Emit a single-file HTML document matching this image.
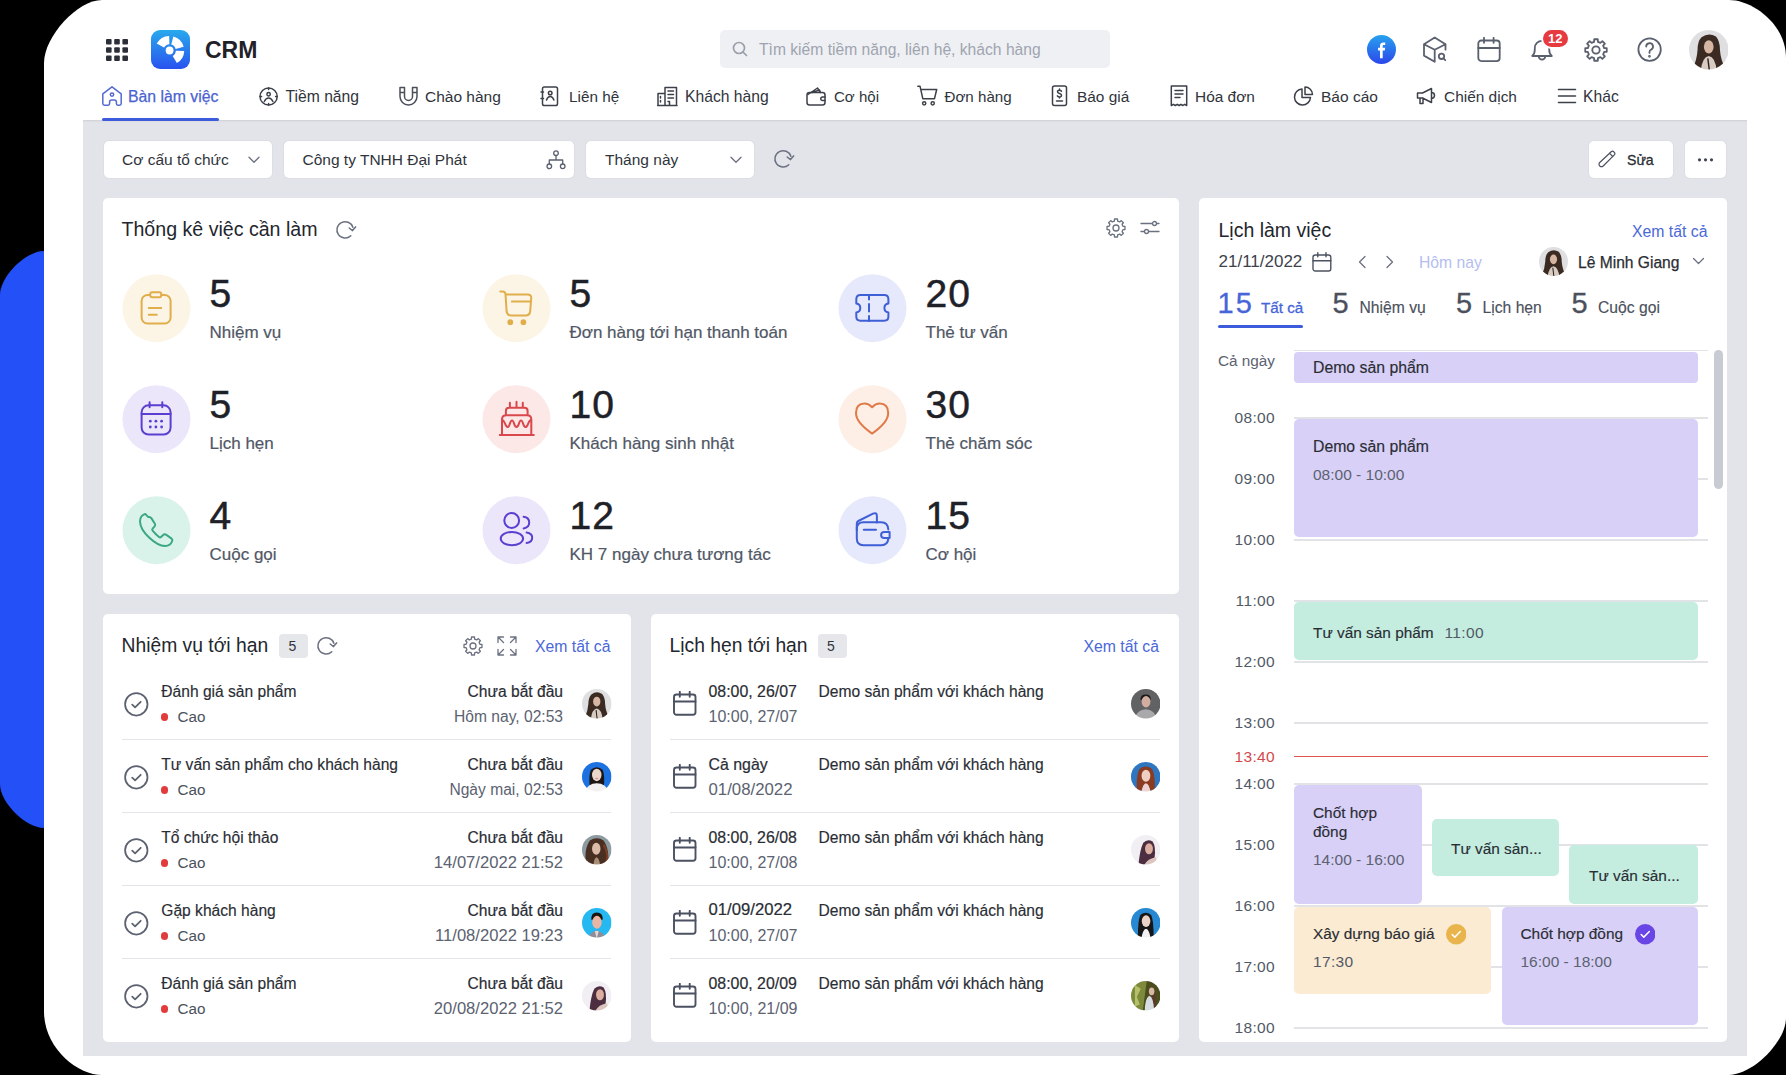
<!DOCTYPE html>
<html><head><meta charset="utf-8">
<style>
*{box-sizing:border-box;margin:0;padding:0}
html,body{width:1786px;height:1075px;overflow:hidden;background:#000}
body{position:relative;font-family:"Liberation Sans",sans-serif;color:#23262d}
.abs{position:absolute}
.t{position:absolute;line-height:0;white-space:nowrap;top:calc(var(--b)*1px - 0.3465em)}
.r{transform:translateX(-100%)}
.blue{position:absolute;left:-2px;top:251px;width:120px;height:577px;background:#2450f8;border-radius:46px}
.frame{position:absolute;left:44px;top:0;width:1742px;height:1075px;background:#fff;border-radius:60px}
.gray{position:absolute;left:83px;top:120px;width:1664px;height:936px;background:#e3e4e9;box-shadow:inset 0 2px 2px -1px rgba(0,0,0,0.09)}
.panel{position:absolute;background:#fff;border-radius:5px}
.nav{font-size:15.7px;color:#30343b}
.nav svg{position:absolute;top:86px}
.ico{fill:none;stroke:#4b5160;stroke-width:1.6;stroke-linecap:round;stroke-linejoin:round}
.dd{position:absolute;top:141px;height:37px;background:#fff;border-radius:5px;box-shadow:0 0 0 1px #dcdee4}
.ft{font-size:15.5px;color:#30343b}
.circ{position:absolute;width:68px;height:68px;border-radius:50%}
.num{font-size:39px;letter-spacing:1px;color:#1e2127;font-weight:400;-webkit-text-stroke:0.5px #1e2127}
.lab{font-size:17px;color:#505766;-webkit-text-stroke:0.2px #505766}
.sep{position:absolute;height:1px;background:#e3e5ea}
</style></head><body>
<svg width="0" height="0" style="position:absolute"><defs><filter id="soft" x="-10%" y="-10%" width="120%" height="120%"><feGaussianBlur stdDeviation="0.45"/></filter></defs></svg>
<svg class="abs" style="left:0;top:0" width="60" height="1075" viewBox="0 0 60 1075"><path d="M50 251H44C25.5 251 0 276.5 0 295V784C0 802.5 25.5 828 44 828H50Z" fill="#2450f8"/></svg>
<svg class="abs" style="left:0;top:0" width="1786" height="1075" viewBox="0 0 1786 1075"><path d="M44 63C44 36.5 77.6 0 102 0L1729 0C1752.9 0 1786 24.4 1786 58L1786 1017.7C1786 1041.8 1752.8 1075 1728.7 1075L102 1075C77.6 1075 44 1048.3 44 1011.5Z" fill="#fff"/></svg>
<div class="gray"></div>

<!-- HEADER -->
<svg class="abs" style="left:106px;top:39px" width="22" height="22" viewBox="0 0 22 22" fill="#2b2f38">
<rect x="0" y="0" width="5.6" height="5.6" rx="1"/><rect x="8.2" y="0" width="5.6" height="5.6" rx="1"/><rect x="16.4" y="0" width="5.6" height="5.6" rx="1"/>
<rect x="0" y="8.2" width="5.6" height="5.6" rx="1"/><rect x="8.2" y="8.2" width="5.6" height="5.6" rx="1"/><rect x="16.4" y="8.2" width="5.6" height="5.6" rx="1"/>
<rect x="0" y="16.4" width="5.6" height="5.6" rx="1"/><rect x="8.2" y="16.4" width="5.6" height="5.6" rx="1"/><rect x="16.4" y="16.4" width="5.6" height="5.6" rx="1"/>
</svg>
<div class="abs" style="left:151px;top:30px;width:39px;height:39px;border-radius:9px;background:linear-gradient(180deg,#28aaec,#2a52ef)"></div>
<svg class="abs" style="left:151px;top:30px" width="39" height="39" viewBox="0 0 39 39" fill="#fff">
<path d="M5.7 13.6A14.6 14.6 0 0 1 18.1 5.9L18.4 14.3A6.2 6.2 0 0 0 13.1 17.6Z"/>
<path d="M22.4 6.4A14.6 14.6 0 0 1 32.7 16.7L24.6 18.9A6.2 6.2 0 0 0 20.2 14.5Z"/>
<path d="M33.2 21.0A14.6 14.6 0 0 1 25.9 33.1L21.7 25.9A6.2 6.2 0 0 0 24.8 20.7Z"/>
<circle cx="18.6" cy="20.5" r="3.9"/>
</svg>
<div class="t" style="left:205px;--b:58;font-size:23px;font-weight:700;color:#1f2228">CRM</div>

<div class="abs" style="left:720px;top:30px;width:390px;height:38px;background:#eff0f3;border-radius:5px"></div>
<svg class="abs" style="left:732px;top:41px" width="16" height="16" viewBox="0 0 16 16"><circle cx="7" cy="7" r="5.5" fill="none" stroke="#9aa0ab" stroke-width="1.7"/><path d="M11 11l3.5 3.5" stroke="#9aa0ab" stroke-width="1.7" stroke-linecap="round"/></svg>
<div class="t" style="left:759px;--b:55.7;font-size:15.65px;color:#9ea4b0">Tìm kiếm tiềm năng, liên hệ, khách hàng</div>


<!-- header right icons -->
<div class="abs" style="left:1367px;top:35px;width:29px;height:29px;border-radius:50%;background:linear-gradient(180deg,#27a2ef,#2b47ea)"></div>
<svg class="abs" style="left:1367px;top:35px" width="29" height="29" viewBox="0 0 29 29"><path d="M13 23.3V15.6h-2v-2.9h2v-1.9c0-2.3 1.3-3.4 3.4-3.4.8 0 1.5.1 1.8.1v2.6h-1.2c-1 0-1.3.5-1.3 1.2v1.4h2.5l-.4 2.9h-2.1v7.7z" fill="#fff"/></svg>
<svg class="abs ico" style="left:1422px;top:36px;stroke:#5a606e;stroke-width:1.8" width="26" height="27" viewBox="0 0 26 27"><path d="M12.7 1.6L2 8.2v11.4l10.7 6.2M12.7 1.6l10.8 6.6v5.5M2 8.2l10.7 5.6 10.8-5.6M12.7 13.8V25.8"/><circle cx="19.5" cy="20.3" r="2.7"/><path d="M21.5 22.3l1.8 1.9"/></svg>
<svg class="abs ico" style="left:1477px;top:37px;stroke:#5a606e;stroke-width:1.8" width="24" height="26" viewBox="0 0 24 26"><rect x="1.3" y="3.5" width="21.4" height="20.6" rx="3"/><path d="M1.3 11h21.4M7 0.8v5M16.6 0.8v5"/></svg>
<svg class="abs ico" style="left:1530px;top:37px;stroke:#5a606e;stroke-width:1.8" width="24" height="26" viewBox="0 0 24 26"><path d="M2.2 19h19.6q-2.6-2.2-2.6-6.5V11a7.2 7.2 0 0 0-14.4 0v1.5q0 4.3-2.6 6.5z"/><path d="M8.7 19.3a3.3 3.3 0 0 0 6.6 0"/></svg>
<div class="abs" style="left:1541px;top:28px;width:29px;height:21px;border-radius:11px;background:#e73a40;border:2px solid #fff"></div>
<div class="t" style="left:1548px;--b:43.5;font-size:13px;font-weight:700;color:#fff">12</div>
<svg class="abs ico" style="left:1583px;top:36.6px;stroke:#5a606e;stroke-width:1.8" width="26" height="26" viewBox="0 0 26 26"><path d="M11.05 4.83 L11.21 2.25 L14.79 2.25 L14.95 4.83 L17.40 5.84 L19.34 4.13 L21.87 6.66 L20.16 8.60 L21.17 11.05 L23.75 11.21 L23.75 14.79 L21.17 14.95 L20.16 17.40 L21.87 19.34 L19.34 21.87 L17.40 20.16 L14.95 21.17 L14.79 23.75 L11.21 23.75 L11.05 21.17 L8.60 20.16 L6.66 21.87 L4.13 19.34 L5.84 17.40 L4.83 14.95 L2.25 14.79 L2.25 11.21 L4.83 11.05 L5.84 8.60 L4.13 6.66 L6.66 4.13 L8.60 5.84Z"/><circle cx="13" cy="13" r="3.7"/></svg>
<svg class="abs ico" style="left:1636px;top:36px;stroke:#5a606e;stroke-width:1.8" width="27" height="27" viewBox="0 0 27 27"><circle cx="13.6" cy="13.6" r="11.2"/><path d="M10.2 10.6a3.4 3.4 0 1 1 4.6 3.2c-.9.4-1.3 1.2-1.3 2.1v1"/><circle cx="13.5" cy="20.3" r="0.5" fill="#5a606e"/></svg>
<svg class="abs" style="left:1688.5px;top:30.0px" width="39.5" height="39.5" viewBox="0 0 30 30"><defs><clipPath id="c170849"><circle cx="15" cy="15" r="15"/></clipPath></defs><g clip-path="url(#c170849)" filter="url(#soft)"><rect width="30" height="30" fill="#dfdee0"/><path d="M9.5 5.5Q15 1.5 20.5 5Q23.5 8.5 23.5 15Q24 23 28 30L2.5 30Q6 23 6.5 15Q6.5 8.5 9.5 5.5Z" fill="#3a2c24"/><ellipse cx="15" cy="12.8" rx="3.7" ry="5" fill="#d6b5a3"/><path d="M9 31Q10 20.5 15 19.8Q20 20.5 21 31Z" fill="#d8cbc2"/><path d="M14.3 21.5L15.5 31" stroke="#2d2420" stroke-width="1.1"/></g></svg>

<!-- NAV -->
<svg class="abs ico" style="left:102px;top:86px;stroke:#5469d4;stroke-width:1.5" width="20" height="20" viewBox="0 0 20 20"><path d="M0.8 7.8L10 0.8l9.2 7V17.6q0 1.6-1.6 1.6h-1.6q-1.6 0-1.6-1.6v-1.5q0-2.1-2.1-2.1H9.7q-2.1 0-2.1 2.1v1.5q0 1.6-1.6 1.6H2.4Q0.8 19.2 0.8 17.6z"/><circle cx="10" cy="8.6" r="1.7"/></svg>
<div class="t" style="left:128px;--b:102;font-size:15.8px;color:#4b63d0;-webkit-text-stroke:0.25px #4b63d0">Bàn làm việc</div>
<div class="abs" style="left:102px;top:117.5px;width:117px;height:3px;border-radius:2px;background:#3d5cdc"></div>

<svg class="abs ico" style="left:259px;top:87px;stroke:#3c4049;stroke-width:1.5" width="20" height="20" viewBox="0 0 20 20"><circle cx="9.6" cy="9.5" r="8.6"/><circle cx="9.6" cy="7.3" r="1.7"/><path d="M5.3 14.5q1.6-3.5 4.3-3.5t4.3 3.5M9.6 0.9v1.6M9.6 16.5v1.6M1 9.5h1.6M16.6 9.5h1.6"/></svg>
<div class="t nav" style="left:285.5px;--b:102">Tiềm năng</div>

<svg class="abs ico" style="left:399px;top:86px;stroke:#4a4f5a;stroke-width:1.5" width="19" height="20" viewBox="0 0 19 20"><path d="M1 1.5h4.5v9a4 4 0 0 0 8 0v-9H18v9a8.5 8.5 0 0 1-17 0z M1 6.5h4.5M13.5 6.5H18"/></svg>
<div class="t nav" style="left:425px;--b:102;font-size:15.5px">Chào hàng</div>

<svg class="abs ico" style="left:540px;top:86px;stroke:#3c4049;stroke-width:1.5" width="19" height="21" viewBox="0 0 19 21"><rect x="2.5" y="1" width="15" height="18.5" rx="1.8"/><circle cx="10.2" cy="7" r="1.8"/><path d="M6.5 14q1.3-3.5 3.7-3.5t3.7 3.5M1 6h2.5M1 12.5h2.5"/></svg>
<div class="t nav" style="left:569px;--b:102;font-size:15.3px">Liên hệ</div>

<svg class="abs ico" style="left:657px;top:86px;stroke:#3c4049;stroke-width:1.5" width="21" height="21" viewBox="0 0 21 21"><path d="M1 19.5V7.5h7V19.5M8 19.5V1.5h11.5v18M0.5 19.5h19.5M3.5 10.5v1.5M3.5 14.5v1.5M11 5h5.5M11 8.5h5.5M11 12h5.5M11 15.5h1.5v4"/></svg>
<div class="t nav" style="left:685px;--b:102">Khách hàng</div>

<svg class="abs ico" style="left:806px;top:86px;stroke:#3c4049;stroke-width:1.5" width="21" height="21" viewBox="0 0 21 21"><path d="M2 8.5l9.5-6.5 2.8 4.5M6 6.5l7.5-2.5 1 2.5"/><rect x="1" y="6.5" width="18" height="12.5" rx="2.5"/><path d="M19 11h-2.5a1.6 1.6 0 0 0 0 3.5H19"/></svg>
<div class="t nav" style="left:834px;--b:102;font-size:15.05px">Cơ hội</div>

<svg class="abs ico" style="left:917px;top:85px;stroke:#3c4049;stroke-width:1.5" width="21" height="22" viewBox="0 0 21 22"><path d="M0.8 1.2h2.2l2.8 12.5h11.7l2.2-9.2H4.2"/><circle cx="7.2" cy="18.3" r="1.6"/><circle cx="15.7" cy="18.3" r="1.6"/></svg>
<div class="t nav" style="left:944.5px;--b:102;font-size:15.15px">Đơn hàng</div>

<svg class="abs ico" style="left:1051px;top:85px;stroke:#3c4049;stroke-width:1.5" width="17" height="22" viewBox="0 0 17 22"><rect x="1.5" y="1" width="14" height="19.5" rx="2"/><path d="M10.5 6.2c-.5-.7-1.2-1-2-1-1.2 0-2 .7-2 1.6 0 2.2 4 1.3 4 3.5 0 .9-.8 1.6-2 1.6-.9 0-1.6-.4-2.1-1M8.5 4v1.2M8.5 11.9v1.2M5.5 16h6"/></svg>
<div class="t nav" style="left:1077px;--b:102;font-size:15.4px">Báo giá</div>

<svg class="abs ico" style="left:1170px;top:85px;stroke:#3c4049;stroke-width:1.5" width="18" height="22" viewBox="0 0 18 22"><path d="M1.3 1h15.4v19.5l-2-1.2-1.8 1.2-1.9-1.2-1.9 1.2-1.9-1.2-1.9 1.2-2-1.2-2 1.2z M5 5.5h8M5 9h8M5 12.5h5"/></svg>
<div class="t nav" style="left:1195px;--b:102;font-size:15.45px">Hóa đơn</div>

<svg class="abs ico" style="left:1293px;top:86px;stroke:#3c4049;stroke-width:1.5" width="21" height="21" viewBox="0 0 21 21"><path d="M9 3a8 8 0 1 0 8.5 8.5H9z"/><path d="M12 1v7.5h7.5A7.5 7.5 0 0 0 12 1z"/></svg>
<div class="t nav" style="left:1321px;--b:102;font-size:15.5px">Báo cáo</div>

<svg class="abs ico" style="left:1416px;top:86px;stroke:#3c4049;stroke-width:1.5" width="22" height="20" viewBox="0 0 22 20"><path d="M1.5 7h5l9-4.5v14l-9-4.5h-5z M4 12v5.5h3V12 M15.5 6.5a3 3 0 0 1 0 6"/></svg>
<div class="t nav" style="left:1444px;--b:102;font-size:15.45px">Chiến dịch</div>

<svg class="abs ico" style="left:1557px;top:87px;stroke:#3c4049;stroke-width:1.6" width="20" height="18" viewBox="0 0 20 18"><path d="M1.5 2.5h17M1.5 9h17M1.5 15.5h17"/></svg>
<div class="t nav" style="left:1583px;--b:102">Khác</div>


<!-- FILTER BAR -->
<div class="dd" style="left:104px;width:168px"></div>
<div class="t ft" style="left:122px;--b:165">Cơ cấu tổ chức</div>
<svg class="abs ico" style="left:248px;top:156px;stroke:#6b7180;stroke-width:1.3" width="12" height="8" viewBox="0 0 12 8"><path d="M1 1.2l5 5 5-5"/></svg>
<div class="dd" style="left:284px;width:290px"></div>
<div class="t ft" style="left:302.5px;--b:165">Công ty TNHH Đại Phát</div>
<svg class="abs ico" style="left:546px;top:150px;stroke:#5a606e;stroke-width:1.3" width="20" height="20" viewBox="0 0 20 20"><circle cx="10" cy="3.2" r="2.3"/><circle cx="3.3" cy="16.3" r="2.3"/><circle cx="16.7" cy="16.3" r="2.3"/><path d="M10 5.5v4M3.3 14v-4h13.4v4"/></svg>
<div class="dd" style="left:586px;width:168px"></div>
<div class="t ft" style="left:605px;--b:165">Tháng này</div>
<svg class="abs ico" style="left:730px;top:156px;stroke:#6b7180;stroke-width:1.3" width="12" height="8" viewBox="0 0 12 8"><path d="M1 1.2l5 5 5-5"/></svg>
<svg class="abs ico" style="left:773.3px;top:149.4px;stroke:#6b7180;stroke-width:1.5" width="24" height="22" viewBox="0 0 24 22"><path d="M15.8 15.8A8.2 8.2 0 1 1 17.9 7.3"/><path d="M14.2 8L17.5 10.6 20.6 6.9"/></svg>

<div class="dd" style="left:1589px;width:84px"></div>
<svg class="abs ico" style="left:1597px;top:150px;stroke:#4b5160;stroke-width:1.2" width="19" height="19" viewBox="0 0 19 19"><path d="M14.2 1.8a1.8 1.8 0 0 1 2.5 0l.6.6a1.8 1.8 0 0 1 0 2.5L6.2 16a2.4 2.4 0 0 1-3.4 0l-.1-.1a2.4 2.4 0 0 1 0-3.4z"/><path d="M12.6 3.4l3.1 3.1"/></svg>
<div class="t" style="left:1627px;--b:165;font-size:14.1px;color:#2b2e35;-webkit-text-stroke:0.3px #2b2e35">Sửa</div>
<div class="dd" style="left:1685px;width:41px"></div>
<svg class="abs" style="left:1697px;top:156.5px" width="17" height="6" viewBox="0 0 17 6" fill="#40454f"><circle cx="2.5" cy="2.8" r="1.6"/><circle cx="8.5" cy="2.8" r="1.6"/><circle cx="14.5" cy="2.8" r="1.6"/></svg>

<!-- PANELS -->
<div class="panel" style="left:103px;top:198px;width:1076px;height:396px"></div>
<div class="panel" style="left:103px;top:614px;width:528px;height:428px"></div>
<div class="panel" style="left:651px;top:614px;width:528px;height:428px"></div>
<div class="panel" style="left:1199px;top:198px;width:528px;height:844px"></div>


<!-- STATS -->
<div class="t" style="left:121.5px;--b:236;font-size:19.6px;color:#23262d">Thống kê việc cần làm</div>
<svg class="abs ico" style="left:334.8px;top:219.8px;stroke:#6b7180;stroke-width:1.5" width="24" height="22" viewBox="0 0 24 22"><path d="M15.8 15.8A8.2 8.2 0 1 1 17.9 7.3"/><path d="M14.2 8L17.5 10.6 20.6 6.9"/></svg>
<svg class="abs ico" style="left:1105.2px;top:216.7px;stroke:#6b7180;stroke-width:1.3" width="22" height="22" viewBox="0 0 22 22"><path d="M9.35 4.09 L9.51 2.02 L12.49 2.02 L12.65 4.09 L14.72 4.95 L16.29 3.60 L18.40 5.71 L17.05 7.28 L17.91 9.35 L19.98 9.51 L19.98 12.49 L17.91 12.65 L17.05 14.72 L18.40 16.29 L16.29 18.40 L14.72 17.05 L12.65 17.91 L12.49 19.98 L9.51 19.98 L9.35 17.91 L7.28 17.05 L5.71 18.40 L3.60 16.29 L4.95 14.72 L4.09 12.65 L2.02 12.49 L2.02 9.51 L4.09 9.35 L4.95 7.28 L3.60 5.71 L5.71 3.60 L7.28 4.95Z"/><circle cx="11" cy="11" r="3"/></svg>
<svg class="abs ico" style="left:1140px;top:219px;stroke:#6b7180;stroke-width:1.3" width="20" height="17" viewBox="0 0 20 17"><path d="M1 4.5h11.5M16.5 4.5H19M1 12.5h3.5M8.5 12.5H19"/><circle cx="14.5" cy="4.5" r="2"/><circle cx="6.5" cy="12.5" r="2"/></svg>
<svg class="abs" style="left:120px;top:272px" width="74" height="74" viewBox="0 0 74 74"><circle cx="36.5" cy="36.2" r="34" fill="#fcf5e6"/><g fill="none" stroke-width="2" stroke-linecap="round" stroke-linejoin="round"><g stroke="#e0ae4a"><path d="M30.2 23H27.6a6 6 0 0 0-6 6V45.6a6 6 0 0 0 6 6H44.6a6 6 0 0 0 6-6V29a6 6 0 0 0-6-6H41.3"/><rect x="30.2" y="20.3" width="11.1" height="5" rx="2"/><path d="M28.8 36.1H41.2M28.8 42.7H36.8"/></g></g></svg>
<div class="t num" style="left:209.5px;--b:307.5">5</div>
<div class="t lab" style="left:209.5px;--b:338.8">Nhiệm vụ</div>
<svg class="abs" style="left:480px;top:272px" width="74" height="74" viewBox="0 0 74 74"><circle cx="36.5" cy="36.2" r="34" fill="#fcf5e6"/><g fill="none" stroke-width="2" stroke-linecap="round" stroke-linejoin="round"><g stroke="#e0ae4a"><path d="M20.3 19.6h2.4q2.6 0 2.8 2.6L26.6 39.2q0.4 4.4 4.8 4.4H45.6q4.2 0 4.6-4.4L51.2 26.4q0.3-3.9-3.6-3.9H25.7M31.8 29.6H50.8"/><circle cx="30.3" cy="50.2" r="1.9" fill="#e0ae4a"/><circle cx="43.4" cy="50.2" r="1.9" fill="#e0ae4a"/></g></g></svg>
<div class="t num" style="left:569.5px;--b:307.5">5</div>
<div class="t lab" style="left:569.5px;--b:338.8">Đơn hàng tới hạn thanh toán</div>
<svg class="abs" style="left:836px;top:272px" width="74" height="74" viewBox="0 0 74 74"><circle cx="36.5" cy="36.2" r="34" fill="#e6e9fb"/><g fill="none" stroke-width="2" stroke-linecap="round" stroke-linejoin="round"><g stroke="#3f5fd6"><path d="M24.5 23H48.2q4.2 0 4.2 4.2v4.3q-4 .6-4 4.5t4 4.5v4q0 4.2-4.2 4.2H24.5q-4.2 0-4.2-4.2v-4q4-.6 4-4.5t-4-4.5v-4.3q0-4.2 4.2-4.2z"/><path d="M33 23v4.5M33 32v7.5M33 44v5"/></g></g></svg>
<div class="t num" style="left:925.5px;--b:307.5">20</div>
<div class="t lab" style="left:925.5px;--b:338.8">Thẻ tư vấn</div>
<svg class="abs" style="left:120px;top:383px" width="74" height="74" viewBox="0 0 74 74"><circle cx="36.5" cy="36.2" r="34" fill="#ece6fb"/><g fill="none" stroke-width="2" stroke-linecap="round" stroke-linejoin="round"><g stroke="#5b3fd0"><rect x="21.6" y="22.3" width="29" height="29.3" rx="7"/><path d="M21.6 31H50.6M29.6 19.3v5M42.3 19.3v5"/></g><g fill="#5b3fd0"><circle cx="30.3" cy="38.2" r="1.4"/><circle cx="35.9" cy="38.2" r="1.4"/><circle cx="41.6" cy="38.2" r="1.4"/><circle cx="30.3" cy="44" r="1.4"/><circle cx="35.9" cy="44" r="1.4"/><circle cx="41.6" cy="44" r="1.4"/></g></g></svg>
<div class="t num" style="left:209.5px;--b:418.5">5</div>
<div class="t lab" style="left:209.5px;--b:449.8">Lịch hẹn</div>
<svg class="abs" style="left:480px;top:383px" width="74" height="74" viewBox="0 0 74 74"><circle cx="36.5" cy="36.2" r="34" fill="#fde8e8"/><g fill="none" stroke-width="2" stroke-linecap="round" stroke-linejoin="round"><g stroke="#d9484c"><path d="M19.8 52H53.8M22 52V36.5q0-4.3 4.3-4.3H47q4.3 0 4.3 4.3V52M25.9 32.2V28q0-3.2 3.2-3.2H44.4q3.2 0 3.2 3.2v4.2M29.9 19.8v5M36.5 18.8v6M42.8 19.8v5M22 37C25 37 25 44 27.6 44C30.2 44 29.6 37.5 32 37.5C34.4 37.5 33.8 44 36.5 44C39.2 44 38.6 37.5 41 37.5C43.4 37.5 42.8 44 45.5 44C48.2 44 48 37 51.3 37"/></g></g></svg>
<div class="t num" style="left:569.5px;--b:418.5">10</div>
<div class="t lab" style="left:569.5px;--b:449.8">Khách hàng sinh nhật</div>
<svg class="abs" style="left:836px;top:383px" width="74" height="74" viewBox="0 0 74 74"><circle cx="36.5" cy="36.2" r="34" fill="#fdeee6"/><g fill="none" stroke-width="2" stroke-linecap="round" stroke-linejoin="round"><g stroke="#e07a48"><path d="M36.1 24.2q-3.5-3.6-7.5-3.6-8.6 0-8.6 9.5 0 9.5 16.1 20.5 16.1-11 16.1-20.5 0-9.5-8.6-9.5-4 0-7.5 3.6z"/></g></g></svg>
<div class="t num" style="left:925.5px;--b:418.5">30</div>
<div class="t lab" style="left:925.5px;--b:449.8">Thẻ chăm sóc</div>
<svg class="abs" style="left:120px;top:494px" width="74" height="74" viewBox="0 0 74 74"><circle cx="36.5" cy="36.2" r="34" fill="#d9f3eb"/><g fill="none" stroke-width="2" stroke-linecap="round" stroke-linejoin="round"><g stroke="#3aa882"><path d="M25.3 19.9q-5.2 1.7-5.3 7.3 0 7.6 9.1 16.3 8.9 8.4 15.9 8.5 5.3.1 7.2-5 .6-1.7-.9-2.7l-5.3-3.6q-1.5-1-2.8.2l-2.2 2.1q-.9.8-2-.1-3.4-2.7-6.4-6.3-.9-1.1 0-2l2-2.2q1.2-1.3.3-2.7l-3.6-5.6q-1-1.4-3-1z"/></g></g></svg>
<div class="t num" style="left:209.5px;--b:529.5">4</div>
<div class="t lab" style="left:209.5px;--b:560.8">Cuộc gọi</div>
<svg class="abs" style="left:480px;top:494px" width="74" height="74" viewBox="0 0 74 74"><circle cx="36.5" cy="36.2" r="34" fill="#ece6fb"/><g fill="none" stroke-width="2" stroke-linecap="round" stroke-linejoin="round"><g stroke="#5b3fd0"><circle cx="31.7" cy="26.5" r="7.4"/><ellipse cx="31.9" cy="44.6" rx="11.2" ry="6.6"/><path d="M43.6 22.8q5.6.7 5.6 5.8t-5.6 5.8M46.6 38.6q5.6.8 5.6 5.2t-5.6 5.1"/></g></g></svg>
<div class="t num" style="left:569.5px;--b:529.5">12</div>
<div class="t lab" style="left:569.5px;--b:560.8">KH 7 ngày chưa tương tác</div>
<svg class="abs" style="left:836px;top:494px" width="74" height="74" viewBox="0 0 74 74"><circle cx="36.5" cy="36.2" r="34" fill="#e6e9fb"/><g fill="none" stroke-width="2" stroke-linecap="round" stroke-linejoin="round"><g stroke="#3f5fd6"><path d="M20.8 36V29.5q0-1.7 1.5-2.5L37 19.6q3.9-1.6 3.9 2.6V28.5"/><path d="M52.3 35.5q-.5-7.3-7-7.3H27.4q-6.6 0-6.6 6.6V44.6q0 6.6 6.6 6.6H45.3q6.5 0 7-6.6"/><path d="M27.8 35.8H40"/><path d="M53.6 37.9H48.3q-3.2 0-3.2 3.1t3.2 3.1H53.6z"/></g></g></svg>
<div class="t num" style="left:925.5px;--b:529.5">15</div>
<div class="t lab" style="left:925.5px;--b:560.8">Cơ hội</div>

<!-- TASKS -->
<div class="t" style="left:121.5px;--b:652.3;font-size:19.3px;color:#23262d">Nhiệm vụ tới hạn</div>
<div class="abs" style="left:279px;top:634px;width:29px;height:24px;border-radius:4px;background:#e6e7eb"></div>
<div class="t" style="left:288.5px;--b:651;font-size:14px;color:#30343b">5</div>
<svg class="abs ico" style="left:316.4px;top:636.4px;stroke:#6b7180;stroke-width:1.5" width="24" height="22" viewBox="0 0 24 22"><path d="M15.8 15.8A8.2 8.2 0 1 1 17.9 7.3"/><path d="M14.2 8L17.5 10.6 20.6 6.9"/></svg>
<svg class="abs ico" style="left:461.7px;top:634.6px;stroke:#6b7180;stroke-width:1.3" width="22" height="22" viewBox="0 0 22 22"><path d="M9.35 4.09 L9.51 2.02 L12.49 2.02 L12.65 4.09 L14.72 4.95 L16.29 3.60 L18.40 5.71 L17.05 7.28 L17.91 9.35 L19.98 9.51 L19.98 12.49 L17.91 12.65 L17.05 14.72 L18.40 16.29 L16.29 18.40 L14.72 17.05 L12.65 17.91 L12.49 19.98 L9.51 19.98 L9.35 17.91 L7.28 17.05 L5.71 18.40 L3.60 16.29 L4.95 14.72 L4.09 12.65 L2.02 12.49 L2.02 9.51 L4.09 9.35 L4.95 7.28 L3.60 5.71 L5.71 3.60 L7.28 4.95Z"/><circle cx="11" cy="11" r="3"/></svg>
<svg class="abs ico" style="left:497px;top:636px;stroke:#6b7180;stroke-width:1.3" width="20" height="20" viewBox="0 0 20 20"><path d="M1 6.5V1h5.5M13.5 1H19v5.5M19 13.5V19h-5.5M6.5 19H1v-5.5M1.5 1.5l5 5M18.5 1.5l-5 5M18.5 18.5l-5-5M1.5 18.5l5-5"/></svg>
<div class="t" style="left:535px;--b:652;font-size:15.8px;color:#4a68d8">Xem tất cả</div>
<svg class="abs ico" style="left:124.3px;top:692.0px;stroke:#5c6270;stroke-width:1.75" width="25" height="25" viewBox="0 0 25 25"><circle cx="12.3" cy="12.3" r="11.2"/><path d="M8.2 12.6l2.9 2.8 5.6-5.6"/></svg>
<div class="t" style="left:161.3px;--b:697.1;font-size:15.6px;color:#2a2d34;-webkit-text-stroke:0.15px #2a2d34">Đánh giá sản phẩm</div>
<div class="abs" style="left:160.5px;top:713.4px;width:7.8px;height:7.8px;border-radius:50%;background:#e23b3b"></div>
<div class="t" style="left:177.5px;--b:722.5;font-size:15.2px;color:#4b515c">Cao</div>
<div class="t r" style="left:563px;--b:697.1;font-size:15.6px;color:#2a2d34;-webkit-text-stroke:0.2px #2a2d34">Chưa bắt đầu</div>
<div class="t r" style="left:563px;--b:722.5;font-size:15.6px;color:#5b6270">Hôm nay, 02:53</div>
<svg class="abs" style="left:582.2px;top:689.0px" width="29.5" height="29.5" viewBox="0 0 30 30"><defs><clipPath id="c597703"><circle cx="15" cy="15" r="15"/></clipPath></defs><g clip-path="url(#c597703)" filter="url(#soft)"><rect width="30" height="30" fill="#dfdee0"/><path d="M9.5 5.5Q15 1.5 20.5 5Q23.5 8.5 23.5 15Q24 23 28 30L2.5 30Q6 23 6.5 15Q6.5 8.5 9.5 5.5Z" fill="#3a2c24"/><ellipse cx="15" cy="12.8" rx="3.7" ry="5" fill="#d6b5a3"/><path d="M9 31Q10 20.5 15 19.8Q20 20.5 21 31Z" fill="#d8cbc2"/><path d="M14.3 21.5L15.5 31" stroke="#2d2420" stroke-width="1.1"/></g></svg>
<div class="sep" style="left:122px;top:739.0px;width:489px"></div>
<svg class="abs ico" style="left:124.3px;top:765.0px;stroke:#5c6270;stroke-width:1.75" width="25" height="25" viewBox="0 0 25 25"><circle cx="12.3" cy="12.3" r="11.2"/><path d="M8.2 12.6l2.9 2.8 5.6-5.6"/></svg>
<div class="t" style="left:161.3px;--b:770.1;font-size:15.6px;color:#2a2d34;-webkit-text-stroke:0.15px #2a2d34">Tư vấn sản phẩm cho khách hàng</div>
<div class="abs" style="left:160.5px;top:786.4px;width:7.8px;height:7.8px;border-radius:50%;background:#e23b3b"></div>
<div class="t" style="left:177.5px;--b:795.5;font-size:15.2px;color:#4b515c">Cao</div>
<div class="t r" style="left:563px;--b:770.1;font-size:15.6px;color:#2a2d34;-webkit-text-stroke:0.2px #2a2d34">Chưa bắt đầu</div>
<div class="t r" style="left:563px;--b:795.5;font-size:15.6px;color:#5b6270">Ngày mai, 02:53</div>
<svg class="abs" style="left:582.2px;top:762.0px" width="29.5" height="29.5" viewBox="0 0 30 30"><defs><clipPath id="c597776"><circle cx="15" cy="15" r="15"/></clipPath></defs><g clip-path="url(#c597776)" filter="url(#soft)"><rect width="30" height="30" fill="#1a72e0"/><path d="M8 26Q6.5 14 9 8Q15 2.5 21 8Q23.5 14 22 26Z" fill="#1d1613"/><ellipse cx="15" cy="13.2" rx="4.8" ry="6.3" fill="#ecd6cc"/><path d="M2 31Q6 21.5 15 21.5Q24 21.5 28 31Z" fill="#f3f1f1"/><ellipse cx="15" cy="16.8" rx="1.6" ry="0.7" fill="#d98d8d"/></g></svg>
<div class="sep" style="left:122px;top:812.0px;width:489px"></div>
<svg class="abs ico" style="left:124.3px;top:838.0px;stroke:#5c6270;stroke-width:1.75" width="25" height="25" viewBox="0 0 25 25"><circle cx="12.3" cy="12.3" r="11.2"/><path d="M8.2 12.6l2.9 2.8 5.6-5.6"/></svg>
<div class="t" style="left:161.3px;--b:843.1;font-size:15.6px;color:#2a2d34;-webkit-text-stroke:0.15px #2a2d34">Tổ chức hội thảo</div>
<div class="abs" style="left:160.5px;top:859.4px;width:7.8px;height:7.8px;border-radius:50%;background:#e23b3b"></div>
<div class="t" style="left:177.5px;--b:868.5;font-size:15.2px;color:#4b515c">Cao</div>
<div class="t r" style="left:563px;--b:843.1;font-size:15.6px;color:#2a2d34;-webkit-text-stroke:0.2px #2a2d34">Chưa bắt đầu</div>
<div class="t r" style="left:563px;--b:868.5;font-size:16.6px;color:#5b6270">14/07/2022 21:52</div>
<svg class="abs" style="left:582.2px;top:835.0px" width="29.5" height="29.5" viewBox="0 0 30 30"><defs><clipPath id="c597849"><circle cx="15" cy="15" r="15"/></clipPath></defs><g clip-path="url(#c597849)" filter="url(#soft)"><rect width="30" height="30" fill="#8d9aa1"/><path d="M4 29Q2 14 8 5.5Q15 1 22 5.5Q28 14 26.5 29Q15 34 4 29Z" fill="#4a2f24"/><ellipse cx="14.5" cy="14" rx="4.3" ry="6" fill="#dbbaa8"/><path d="M11.5 31Q12.5 23 14.8 22.5Q17.5 23 18.5 31Z" fill="#a88e76"/><path d="M22 10Q27 18 25 27" stroke="#7a3e25" stroke-width="2" fill="none"/></g></svg>
<div class="sep" style="left:122px;top:885.0px;width:489px"></div>
<svg class="abs ico" style="left:124.3px;top:911.0px;stroke:#5c6270;stroke-width:1.75" width="25" height="25" viewBox="0 0 25 25"><circle cx="12.3" cy="12.3" r="11.2"/><path d="M8.2 12.6l2.9 2.8 5.6-5.6"/></svg>
<div class="t" style="left:161.3px;--b:916.1;font-size:15.6px;color:#2a2d34;-webkit-text-stroke:0.15px #2a2d34">Gặp khách hàng</div>
<div class="abs" style="left:160.5px;top:932.4px;width:7.8px;height:7.8px;border-radius:50%;background:#e23b3b"></div>
<div class="t" style="left:177.5px;--b:941.5;font-size:15.2px;color:#4b515c">Cao</div>
<div class="t r" style="left:563px;--b:916.1;font-size:15.6px;color:#2a2d34;-webkit-text-stroke:0.2px #2a2d34">Chưa bắt đầu</div>
<div class="t r" style="left:563px;--b:941.5;font-size:16.6px;color:#5b6270">11/08/2022 19:23</div>
<svg class="abs" style="left:582.2px;top:908.0px" width="29.5" height="29.5" viewBox="0 0 30 30"><defs><clipPath id="c597922"><circle cx="15" cy="15" r="15"/></clipPath></defs><g clip-path="url(#c597922)" filter="url(#soft)"><rect width="30" height="30" fill="#27b9f1"/><path d="M9.5 12Q9 4.5 15 4.5Q21.5 4.5 21 12Z" fill="#1b1410"/><ellipse cx="15.2" cy="14.5" rx="4.8" ry="6.6" fill="#eab5a2"/><path d="M6 31Q9 23.5 15 23Q21 23.5 24 31Z" fill="#8f8d99"/><path d="M13 23.5L15 31 17 23.5Z" fill="#e4d9d6"/></g></svg>
<div class="sep" style="left:122px;top:958.0px;width:489px"></div>
<svg class="abs ico" style="left:124.3px;top:984.0px;stroke:#5c6270;stroke-width:1.75" width="25" height="25" viewBox="0 0 25 25"><circle cx="12.3" cy="12.3" r="11.2"/><path d="M8.2 12.6l2.9 2.8 5.6-5.6"/></svg>
<div class="t" style="left:161.3px;--b:989.1;font-size:15.6px;color:#2a2d34;-webkit-text-stroke:0.15px #2a2d34">Đánh giá sản phẩm</div>
<div class="abs" style="left:160.5px;top:1005.4px;width:7.8px;height:7.8px;border-radius:50%;background:#e23b3b"></div>
<div class="t" style="left:177.5px;--b:1014.5;font-size:15.2px;color:#4b515c">Cao</div>
<div class="t r" style="left:563px;--b:989.1;font-size:15.6px;color:#2a2d34;-webkit-text-stroke:0.2px #2a2d34">Chưa bắt đầu</div>
<div class="t r" style="left:563px;--b:1014.5;font-size:16.6px;color:#5b6270">20/08/2022 21:52</div>
<svg class="abs" style="left:582.2px;top:981.0px" width="29.5" height="29.5" viewBox="0 0 30 30"><defs><clipPath id="c597995"><circle cx="15" cy="15" r="15"/></clipPath></defs><g clip-path="url(#c597995)" filter="url(#soft)"><rect width="30" height="30" fill="#f1eff3"/><path d="M7.5 31Q9 15 12.5 8Q16.5 3.5 22 6.5Q25.5 12 24 23L14 31Z" fill="#4d2f40"/><ellipse cx="18.3" cy="14" rx="4" ry="5.6" fill="#dbae9f"/><path d="M13 31Q17 23.5 25.5 22.5L27 31Z" fill="#dcc5be"/></g></svg>

<!-- APPOINTMENTS -->
<div class="t" style="left:669.5px;--b:652.3;font-size:19.3px;color:#23262d">Lịch hẹn tới hạn</div>
<div class="abs" style="left:817.5px;top:634px;width:29px;height:24px;border-radius:4px;background:#e6e7eb"></div>
<div class="t" style="left:827px;--b:651;font-size:14px;color:#30343b">5</div>
<div class="t" style="left:1083.5px;--b:652;font-size:15.8px;color:#4a68d8">Xem tất cả</div>
<svg class="abs ico" style="left:673px;stroke-width:1.9;top:691.2px;stroke:#4b5160;stroke-width:1.9" width="24" height="25" viewBox="0 0 24 25"><rect x="1" y="3.5" width="21.5" height="20.3" rx="2.5"/><path d="M1 10.5h21.5M6.8 0.8v5M16.7 0.8v5"/></svg>
<div class="t" style="left:708.5px;--b:697.2;font-size:15.9px;color:#2a2d34;-webkit-text-stroke:0.2px #2a2d34">08:00, 26/07</div>
<div class="t" style="left:708.5px;--b:722.4;font-size:16px;color:#5b6270">10:00, 27/07</div>
<div class="t" style="left:818.5px;--b:697.2;font-size:15.6px;color:#2a2d34;-webkit-text-stroke:0.15px #2a2d34">Demo sản phẩm với khách hàng</div>
<svg class="abs" style="left:1130.5px;top:689.0px" width="29.5" height="29.5" viewBox="0 0 30 30"><defs><clipPath id="c1145703"><circle cx="15" cy="15" r="15"/></clipPath></defs><g clip-path="url(#c1145703)" filter="url(#soft)"><rect width="30" height="30" fill="#616264"/><path d="M9.5 11Q9.5 5.5 15 5.5Q20.5 5.5 20 11Z" fill="#1e1a18"/><ellipse cx="15.3" cy="13" rx="4.5" ry="5.8" fill="#d2aea1"/><path d="M3 31Q6 21 15 20.5Q24 21 27 31Z" fill="#a9a9ab"/></g></svg>
<div class="sep" style="left:670px;top:739.0px;width:490px"></div>
<svg class="abs ico" style="left:673px;stroke-width:1.9;top:764.2px;stroke:#4b5160;stroke-width:1.9" width="24" height="25" viewBox="0 0 24 25"><rect x="1" y="3.5" width="21.5" height="20.3" rx="2.5"/><path d="M1 10.5h21.5M6.8 0.8v5M16.7 0.8v5"/></svg>
<div class="t" style="left:708.5px;--b:770.2;font-size:15.9px;color:#2a2d34;-webkit-text-stroke:0.2px #2a2d34">Cả ngày</div>
<div class="t" style="left:708.5px;--b:795.4;font-size:16.8px;color:#5b6270">01/08/2022</div>
<div class="t" style="left:818.5px;--b:770.2;font-size:15.6px;color:#2a2d34;-webkit-text-stroke:0.15px #2a2d34">Demo sản phẩm với khách hàng</div>
<svg class="abs" style="left:1130.5px;top:762.0px" width="29.5" height="29.5" viewBox="0 0 30 30"><defs><clipPath id="c1145776"><circle cx="15" cy="15" r="15"/></clipPath></defs><g clip-path="url(#c1145776)" filter="url(#soft)"><rect width="30" height="30" fill="#2f76c0"/><path d="M6 29Q5 14 8.5 7Q15 2 21.5 7Q25 14 24 29Z" fill="#8b3a20"/><ellipse cx="15.2" cy="14" rx="4.5" ry="6" fill="#efcfc2"/><path d="M10.5 31Q12 22 15.2 21.5Q18.5 22 20 31Z" fill="#ecd3d3"/></g></svg>
<div class="sep" style="left:670px;top:812.0px;width:490px"></div>
<svg class="abs ico" style="left:673px;stroke-width:1.9;top:837.2px;stroke:#4b5160;stroke-width:1.9" width="24" height="25" viewBox="0 0 24 25"><rect x="1" y="3.5" width="21.5" height="20.3" rx="2.5"/><path d="M1 10.5h21.5M6.8 0.8v5M16.7 0.8v5"/></svg>
<div class="t" style="left:708.5px;--b:843.2;font-size:15.9px;color:#2a2d34;-webkit-text-stroke:0.2px #2a2d34">08:00, 26/08</div>
<div class="t" style="left:708.5px;--b:868.4;font-size:16px;color:#5b6270">10:00, 27/08</div>
<div class="t" style="left:818.5px;--b:843.2;font-size:15.6px;color:#2a2d34;-webkit-text-stroke:0.15px #2a2d34">Demo sản phẩm với khách hàng</div>
<svg class="abs" style="left:1130.5px;top:835.0px" width="29.5" height="29.5" viewBox="0 0 30 30"><defs><clipPath id="c1145849"><circle cx="15" cy="15" r="15"/></clipPath></defs><g clip-path="url(#c1145849)" filter="url(#soft)"><rect width="30" height="30" fill="#f1eff3"/><path d="M7.5 31Q9 15 12.5 8Q16.5 3.5 22 6.5Q25.5 12 24 23L14 31Z" fill="#4d2f40"/><ellipse cx="18.3" cy="14" rx="4" ry="5.6" fill="#dbae9f"/><path d="M13 31Q17 23.5 25.5 22.5L27 31Z" fill="#dcc5be"/></g></svg>
<div class="sep" style="left:670px;top:885.0px;width:490px"></div>
<svg class="abs ico" style="left:673px;stroke-width:1.9;top:910.2px;stroke:#4b5160;stroke-width:1.9" width="24" height="25" viewBox="0 0 24 25"><rect x="1" y="3.5" width="21.5" height="20.3" rx="2.5"/><path d="M1 10.5h21.5M6.8 0.8v5M16.7 0.8v5"/></svg>
<div class="t" style="left:708.5px;--b:916.2;font-size:15.9px;color:#2a2d34;-webkit-text-stroke:0.2px #2a2d34;font-size:16.7px">01/09/2022</div>
<div class="t" style="left:708.5px;--b:941.4;font-size:16px;color:#5b6270">10:00, 27/07</div>
<div class="t" style="left:818.5px;--b:916.2;font-size:15.6px;color:#2a2d34;-webkit-text-stroke:0.15px #2a2d34">Demo sản phẩm với khách hàng</div>
<svg class="abs" style="left:1130.5px;top:908.0px" width="29.5" height="29.5" viewBox="0 0 30 30"><defs><clipPath id="c1145922"><circle cx="15" cy="15" r="15"/></clipPath></defs><g clip-path="url(#c1145922)" filter="url(#soft)"><rect width="30" height="30" fill="#2589d2"/><path d="M7 30Q7 12 9.5 7Q15 2.5 20.5 7Q23 12 23 30Z" fill="#171514"/><ellipse cx="15.3" cy="13.3" rx="4.4" ry="6" fill="#ead3c6"/><path d="M10.5 31Q12 21.5 15.3 21Q18.5 21.5 20 31Z" fill="#f2f2f4"/></g></svg>
<div class="sep" style="left:670px;top:958.0px;width:490px"></div>
<svg class="abs ico" style="left:673px;stroke-width:1.9;top:983.2px;stroke:#4b5160;stroke-width:1.9" width="24" height="25" viewBox="0 0 24 25"><rect x="1" y="3.5" width="21.5" height="20.3" rx="2.5"/><path d="M1 10.5h21.5M6.8 0.8v5M16.7 0.8v5"/></svg>
<div class="t" style="left:708.5px;--b:989.2;font-size:15.9px;color:#2a2d34;-webkit-text-stroke:0.2px #2a2d34">08:00, 20/09</div>
<div class="t" style="left:708.5px;--b:1014.4;font-size:16px;color:#5b6270">10:00, 21/09</div>
<div class="t" style="left:818.5px;--b:989.2;font-size:15.6px;color:#2a2d34;-webkit-text-stroke:0.15px #2a2d34">Demo sản phẩm với khách hàng</div>
<svg class="abs" style="left:1130.5px;top:981.0px" width="29.5" height="29.5" viewBox="0 0 30 30"><defs><clipPath id="c1145995"><circle cx="15" cy="15" r="15"/></clipPath></defs><g clip-path="url(#c1145995)" filter="url(#soft)"><rect width="30" height="30" fill="#4b4d1e"/><path d="M0 0H16L12 30H0Z" fill="#7d8a3a"/><path d="M4 4L10 8 6 16 9 24 4 26Z" fill="#b6c06a"/><path d="M21 5Q26 10 25 28L18 30Z" fill="#5a3a2c"/><ellipse cx="21" cy="10.5" rx="2.8" ry="4" fill="#d9b7a5"/><path d="M14 31Q14 18 18.5 15Q23 16 23.5 31Z" fill="#d8dde2"/></g></svg>

<!-- CALENDAR -->
<div class="t" style="left:1218.5px;--b:237;font-size:19.5px;color:#23262d">Lịch làm việc</div>
<div class="t" style="left:1632px;--b:237;font-size:15.8px;color:#4a68d8">Xem tất cả</div>
<div class="t" style="left:1218.5px;--b:268;font-size:17px;color:#3d424b">21/11/2022</div>
<svg class="abs ico" style="left:1312px;top:252px;stroke:#4b5160;stroke-width:1.4" width="20" height="20" viewBox="0 0 20 20"><rect x="1" y="3" width="17.8" height="16" rx="2.2"/><path d="M1 8.8h17.8M5.8 0.8v4M14 0.8v4"/></svg>
<svg class="abs ico" style="left:1357px;top:255px;stroke:#6b7180;stroke-width:1.3" width="10" height="14" viewBox="0 0 10 14"><path d="M8 1.5L2.5 7 8 12.5"/></svg>
<svg class="abs ico" style="left:1385px;top:255px;stroke:#6b7180;stroke-width:1.3" width="10" height="14" viewBox="0 0 10 14"><path d="M2 1.5L7.5 7 2 12.5"/></svg>
<div class="t" style="left:1419px;--b:268;font-size:15.7px;color:#b4bdf0">Hôm nay</div>
<svg class="abs" style="left:1539.0px;top:247.3px" width="29" height="29" viewBox="0 0 30 30"><defs><clipPath id="c1553261"><circle cx="15" cy="15" r="15"/></clipPath></defs><g clip-path="url(#c1553261)" filter="url(#soft)"><rect width="30" height="30" fill="#dfdee0"/><path d="M9.5 5.5Q15 1.5 20.5 5Q23.5 8.5 23.5 15Q24 23 28 30L2.5 30Q6 23 6.5 15Q6.5 8.5 9.5 5.5Z" fill="#3a2c24"/><ellipse cx="15" cy="12.8" rx="3.7" ry="5" fill="#d6b5a3"/><path d="M9 31Q10 20.5 15 19.8Q20 20.5 21 31Z" fill="#d8cbc2"/><path d="M14.3 21.5L15.5 31" stroke="#2d2420" stroke-width="1.1"/></g></svg>
<div class="t" style="left:1578px;--b:268;font-size:15.6px;color:#2a2d34;-webkit-text-stroke:0.25px #2a2d34">Lê Minh Giang</div>
<svg class="abs ico" style="left:1692px;top:257px;stroke:#6b7180;stroke-width:1.3" width="13" height="8" viewBox="0 0 13 8"><path d="M1.5 1.5l5 5 5-5"/></svg>
<div class="t" style="left:1217.5px;--b:313;font-size:29px;letter-spacing:2px;color:#4565d8;-webkit-text-stroke:0.3px #4565d8">15</div>
<div class="t" style="left:1261px;--b:313;font-size:15.2px;color:#4565d8;-webkit-text-stroke:0.3px #4565d8">Tất cả</div>
<div class="abs" style="left:1218px;top:325px;width:85px;height:3px;border-radius:2px;background:#3d5cdc"></div>
<div class="t" style="left:1332.5px;--b:313;font-size:29px;color:#4b505c;-webkit-text-stroke:0.3px #4b505c">5</div>
<div class="t" style="left:1359.5px;--b:313;font-size:15.7px;color:#4b505c;-webkit-text-stroke:0.15px #4b505c">Nhiệm vụ</div>
<div class="t" style="left:1456px;--b:313;font-size:29px;color:#4b505c;-webkit-text-stroke:0.3px #4b505c">5</div>
<div class="t" style="left:1482.5px;--b:313;font-size:15.7px;color:#4b505c;-webkit-text-stroke:0.15px #4b505c">Lịch hẹn</div>
<div class="t" style="left:1571.5px;--b:313;font-size:29px;color:#4b505c;-webkit-text-stroke:0.3px #4b505c">5</div>
<div class="t" style="left:1598px;--b:313;font-size:15.7px;color:#4b505c;-webkit-text-stroke:0.15px #4b505c">Cuộc gọi</div>
<div class="t" style="left:1218px;--b:366;font-size:15.3px;color:#5b6270">Cả ngày</div>
<div class="sep" style="left:1294px;top:349.75px;width:414px;height:1.6px;background:#e1e3e7"></div>
<div class="abs" style="left:1294px;top:352px;width:404px;height:31px;border-radius:4px;background:#d8d0f7"></div>
<div class="t" style="left:1313px;--b:373.7;font-size:15.8px;color:#2a2d34;-webkit-text-stroke:0.15px #2a2d34">Demo sản phẩm</div>
<div class="abs" style="left:1713.5px;top:349.5px;width:9px;height:139.5px;border-radius:5px;background:#c8cbd2"></div>
<div class="sep" style="left:1294px;top:417.25px;width:414px;height:1.6px;background:#e1e3e7"></div>
<div class="t r" style="left:1275px;--b:423.6;font-size:15.5px;letter-spacing:0.35px;color:#525966">08:00</div>
<div class="sep" style="left:1294px;top:478.25px;width:414px;height:1.6px;background:#e1e3e7"></div>
<div class="t r" style="left:1275px;--b:484.6;font-size:15.5px;letter-spacing:0.35px;color:#525966">09:00</div>
<div class="sep" style="left:1294px;top:539.25px;width:414px;height:1.6px;background:#e1e3e7"></div>
<div class="t r" style="left:1275px;--b:545.6;font-size:15.5px;letter-spacing:0.35px;color:#525966">10:00</div>
<div class="sep" style="left:1294px;top:600.25px;width:414px;height:1.6px;background:#e1e3e7"></div>
<div class="t r" style="left:1275px;--b:606.6;font-size:15.5px;letter-spacing:0.35px;color:#525966">11:00</div>
<div class="sep" style="left:1294px;top:661.25px;width:414px;height:1.6px;background:#e1e3e7"></div>
<div class="t r" style="left:1275px;--b:667.6;font-size:15.5px;letter-spacing:0.35px;color:#525966">12:00</div>
<div class="sep" style="left:1294px;top:722.25px;width:414px;height:1.6px;background:#e1e3e7"></div>
<div class="t r" style="left:1275px;--b:728.6;font-size:15.5px;letter-spacing:0.35px;color:#525966">13:00</div>
<div class="sep" style="left:1294px;top:783.25px;width:414px;height:1.6px;background:#e1e3e7"></div>
<div class="t r" style="left:1275px;--b:789.6;font-size:15.5px;letter-spacing:0.35px;color:#525966">14:00</div>
<div class="sep" style="left:1294px;top:844.25px;width:414px;height:1.6px;background:#e1e3e7"></div>
<div class="t r" style="left:1275px;--b:850.6;font-size:15.5px;letter-spacing:0.35px;color:#525966">15:00</div>
<div class="sep" style="left:1294px;top:905.25px;width:414px;height:1.6px;background:#e1e3e7"></div>
<div class="t r" style="left:1275px;--b:911.6;font-size:15.5px;letter-spacing:0.35px;color:#525966">16:00</div>
<div class="sep" style="left:1294px;top:966.25px;width:414px;height:1.6px;background:#e1e3e7"></div>
<div class="t r" style="left:1275px;--b:972.6;font-size:15.5px;letter-spacing:0.35px;color:#525966">17:00</div>
<div class="sep" style="left:1294px;top:1027.25px;width:414px;height:1.6px;background:#e1e3e7"></div>
<div class="t r" style="left:1275px;--b:1033.6;font-size:15.5px;letter-spacing:0.35px;color:#525966">18:00</div>
<div class="abs" style="left:1294px;top:755.5px;width:414px;height:1.5px;background:#e0534f"></div>
<div class="t r" style="left:1275px;--b:762.5;font-size:15.5px;letter-spacing:0.35px;color:#d24a4c">13:40</div>
<div class="abs" style="left:1294px;top:418.5px;width:403.8px;height:118.5px;border-radius:5px;background:#d8d0f7"></div>
<div class="t" style="left:1313px;--b:452.2;font-size:15.8px;color:#2a2d34;-webkit-text-stroke:0.15px #2a2d34">Demo sản phẩm</div>
<div class="t" style="left:1313px;--b:480.1;font-size:15.5px;color:#5b6270">08:00 - 10:00</div>
<div class="abs" style="left:1294px;top:601.5px;width:403.8px;height:58.5px;border-radius:5px;background:#c4ede0"></div>
<div class="t" style="left:1313px;--b:638;font-size:15.4px;color:#2a2d34;-webkit-text-stroke:0.15px #2a2d34">Tư vấn sản phẩm</div>
<div class="t" style="left:1444.5px;--b:638;font-size:15.5px;letter-spacing:0.35px;color:#525966">11:00</div>
<div class="abs" style="left:1294px;top:785px;width:127.5px;height:118.5px;border-radius:5px;background:#d8d0f7"></div>
<div class="t" style="left:1313px;--b:818;font-size:15.4px;color:#2a2d34;-webkit-text-stroke:0.15px #2a2d34">Chốt hợp</div>
<div class="t" style="left:1313px;--b:837.3;font-size:15.4px;color:#2a2d34;-webkit-text-stroke:0.15px #2a2d34">đồng</div>
<div class="t" style="left:1313px;--b:865.6;font-size:15.5px;color:#5b6270">14:00 - 16:00</div>
<div class="abs" style="left:1431.5px;top:818.5px;width:127.5px;height:57.5px;border-radius:5px;background:#c4ede0"></div>
<div class="t" style="left:1451px;--b:854.5;font-size:15.4px;color:#2a2d34;-webkit-text-stroke:0.15px #2a2d34">Tư vấn sản...</div>
<div class="abs" style="left:1569px;top:845px;width:129px;height:58.5px;border-radius:5px;background:#c4ede0"></div>
<div class="t" style="left:1589px;--b:881;font-size:15.4px;color:#2a2d34;-webkit-text-stroke:0.15px #2a2d34">Tư vấn sản...</div>
<div class="abs" style="left:1294px;top:906.5px;width:197px;height:87.0px;border-radius:5px;background:#fbebd2"></div>
<div class="t" style="left:1313px;--b:939.6;font-size:15.4px;color:#2a2d34;-webkit-text-stroke:0.15px #2a2d34">Xây dựng báo giá</div>
<svg class="abs" style="left:1445.5px;top:924.2px" width="20.5" height="20.5" viewBox="0 0 20 20"><circle cx="10" cy="10" r="10" fill="#e9b44c"/><path d="M6 10.2l2.6 2.6 5.4-5.4" fill="none" stroke="#fff" stroke-width="1.4" stroke-linecap="round" stroke-linejoin="round"/></svg>
<div class="t" style="left:1313px;--b:967.1;font-size:15.5px;letter-spacing:0.35px;color:#525966">17:30</div>
<div class="abs" style="left:1501.5px;top:906.5px;width:196.5px;height:118.0px;border-radius:5px;background:#d8d0f7"></div>
<div class="t" style="left:1520.5px;--b:939.6;font-size:15.4px;color:#2a2d34;-webkit-text-stroke:0.15px #2a2d34">Chốt hợp đồng</div>
<svg class="abs" style="left:1634.5px;top:924.2px" width="20.5" height="20.5" viewBox="0 0 20 20"><circle cx="10" cy="10" r="10" fill="#6a45e6"/><path d="M6 10.2l2.6 2.6 5.4-5.4" fill="none" stroke="#fff" stroke-width="1.4" stroke-linecap="round" stroke-linejoin="round"/></svg>
<div class="t" style="left:1520.5px;--b:967.1;font-size:15.5px;color:#5b6270">16:00 - 18:00</div>
</body></html>
